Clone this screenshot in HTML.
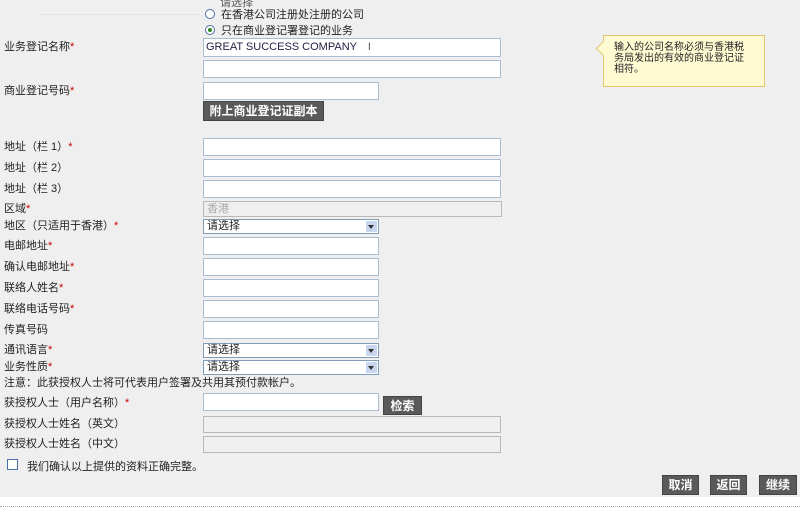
<!DOCTYPE html>
<html><head><meta charset="utf-8"><style>
body{margin:0;width:800px;height:512px;background:#fff;position:relative;overflow:hidden;font-family:"Liberation Sans","Noto Sans CJK SC",sans-serif;font-size:11px;color:#222}
.bg{position:absolute;left:0;top:0;width:800px;height:497px;background:#efefef}
.a{position:absolute;white-space:nowrap}
.l{position:absolute;left:4px;white-space:nowrap;line-height:14px}
.r{color:#c00}
.in{position:absolute;left:203px;height:16px;background:#fff;border:1px solid #a9bcd2;box-sizing:border-box}
.dis{background:#efefef;border-color:#b8b8b8}
.sel{position:absolute;left:203px;width:176px;height:15px;background:#fff;border:1px solid #7f9db9;box-sizing:border-box;font-size:11px;line-height:13px;padding-left:3px}
.sel:after{content:"";position:absolute;right:1px;top:1px;width:11px;height:11px;background:#c8d6f0}
.sel:before{content:"";position:absolute;right:4px;top:5px;border:3px solid transparent;border-top:4px solid #333;border-bottom:0;z-index:1}
.btn{position:absolute;background:#5a5a5a;color:#fff;font-weight:bold;font-size:12px;text-align:center;line-height:19px;border:1px solid #444;box-sizing:border-box}
.rad{position:absolute;left:205px;width:10px;height:10px;border:1px solid #4a6fa5;border-radius:50%;background:#fff;box-sizing:border-box}
</style></head><body>
<div class="bg"></div>
<div class="a" style="left:40px;top:14px;width:160px;height:1px;background:#e2e2e2"></div>
<div class="a" style="left:220px;top:-6px;color:#555">请选择</div>
<div class="rad" style="top:9px"></div><div class="a" style="left:221px;top:6px">在香港公司注册处注册的公司</div>
<div class="rad" style="top:25px"></div><div class="a" style="left:208px;top:28px;width:4px;height:4px;border-radius:50%;background:#2a8a2a"></div><div class="a" style="left:221px;top:22px">只在商业登记署登记的业务</div>

<div class="l" style="top:40px">业务登记名称<span class="r">*</span></div>
<div class="in" style="top:38px;width:298px;height:19px;padding:2px 0 0 2px;color:#224">GREAT SUCCESS COMPANY <span style="color:#555;margin-left:8px">I</span></div>
<div class="in" style="top:60px;width:298px;height:18px"></div>
<div class="l" style="top:84px">商业登记号码<span class="r">*</span></div>
<div class="in" style="top:82px;width:176px;height:18px"></div>
<div class="btn" style="left:203px;top:101px;width:121px;height:20px">附上商业登记证副本</div>

<div class="a" style="left:603px;top:35px;width:162px;height:52px;background:#fefbd2;border:1px solid #e5c46e;box-sizing:border-box;padding:6px 14px 0 10px;font-size:10px;line-height:11px;white-space:normal">输入的公司名称必须与香港税务局发出的有效的商业登记证相符。</div>
<div class="a" style="left:598px;top:43px;width:10px;height:10px;background:#fefbd2;border-left:1px solid #e5c46e;border-bottom:1px solid #e5c46e;transform:rotate(45deg)"></div>

<div class="l" style="top:140px">地址（栏 1）<span class="r">*</span></div><div class="in" style="top:138px;width:298px;height:18px"></div>
<div class="l" style="top:161px">地址（栏 2）</div><div class="in" style="top:159px;width:298px;height:18px"></div>
<div class="l" style="top:182px">地址（栏 3）</div><div class="in" style="top:180px;width:298px;height:18px"></div>
<div class="l" style="top:202px">区域<span class="r">*</span></div><div class="in dis" style="top:201px;width:299px;color:#aaa;padding-left:3px;line-height:14px">香港</div>
<div class="l" style="top:219px">地区（只适用于香港）<span class="r">*</span></div><div class="sel" style="top:219px">请选择</div>
<div class="l" style="top:239px">电邮地址<span class="r">*</span></div><div class="in" style="top:237px;width:176px;height:18px"></div>
<div class="l" style="top:260px">确认电邮地址<span class="r">*</span></div><div class="in" style="top:258px;width:176px;height:18px"></div>
<div class="l" style="top:281px">联络人姓名<span class="r">*</span></div><div class="in" style="top:279px;width:176px;height:18px"></div>
<div class="l" style="top:302px">联络电话号码<span class="r">*</span></div><div class="in" style="top:300px;width:176px;height:18px"></div>
<div class="l" style="top:323px">传真号码</div><div class="in" style="top:321px;width:176px;height:18px"></div>
<div class="l" style="top:343px">通讯语言<span class="r">*</span></div><div class="sel" style="top:343px">请选择</div>
<div class="l" style="top:360px">业务性质<span class="r">*</span></div><div class="sel" style="top:360px">请选择</div>
<div class="l" style="top:376px">注意：此获授权人士将可代表用户签署及共用其预付款帐户。</div>
<div class="l" style="top:396px">获授权人士（用户名称）<span class="r">*</span></div><div class="in" style="top:393px;width:176px;height:18px"></div>
<div class="btn" style="left:383px;top:396px;width:39px;height:19px">检索</div>
<div class="l" style="top:417px">获授权人士姓名（英文）</div><div class="in dis" style="top:416px;width:298px;height:17px"></div>
<div class="l" style="top:437px">获授权人士姓名（中文）</div><div class="in dis" style="top:436px;width:298px;height:17px"></div>
<div class="a" style="left:7px;top:459px;width:11px;height:11px;border:1px solid #4a6fa5;background:#fff;box-sizing:border-box"></div>
<div class="a" style="left:27px;top:458px">我们确认以上提供的资料正确完整。</div>
<div class="btn" style="left:662px;top:475px;width:37px;height:20px">取消</div>
<div class="btn" style="left:710px;top:475px;width:37px;height:20px">返回</div>
<div class="btn" style="left:759px;top:475px;width:38px;height:20px">继续</div>
<div class="a" style="left:0;top:506px;width:800px;border-top:1px dotted #aaa"></div>
</body></html>
